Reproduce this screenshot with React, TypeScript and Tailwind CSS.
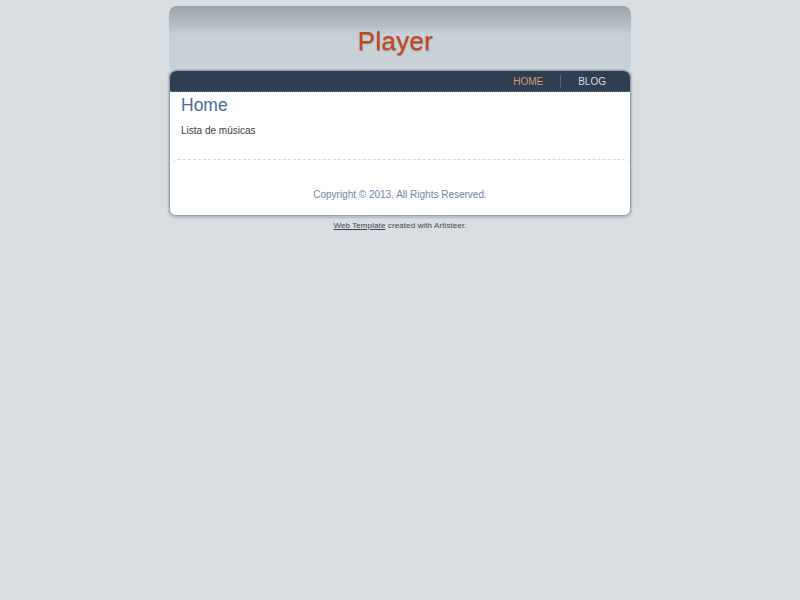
export default function App() {
  return (
    <div className="min-h-screen bg-[#d9dee2] pt-[6px] font-['Liberation_Sans',Arial,sans-serif]">
      <div className="mx-auto w-[462px]">
        {/* header */}
        <div className="flex h-[63px] items-center justify-center rounded-t-[8px] bg-[linear-gradient(to_bottom,#98a3ac_0%,#b4bec6_30%,#c8d0d7_45%,#c9d1d8_100%)] pt-[7px] pr-[9px]">
          <h1 className="text-[26px] leading-none tracking-[0.3px] text-[#c5471a] [text-shadow:0_1px_1px_rgba(60,30,10,0.45)]">
            Player
          </h1>
        </div>

        {/* card */}
        <div className="mt-[1px] overflow-hidden rounded-[7px] border border-[#97a1aa] bg-white shadow-[0_0_0_1px_#b8c0c7,0_1px_2px_1px_rgba(80,90,100,0.3)]">
          <nav className="flex h-[21px] items-center justify-end border-b border-dotted border-[#6b7a8a] bg-[#2f3e50] pr-[24px] text-[10px]">
            <a className="pr-[17px] text-[#d39a74]">HOME</a>
            <span className="h-[13px] w-px bg-[#56657a]" />
            <a className="pl-[17px] text-[#d5dde6]">BLOG</a>
          </nav>

          <div className="h-[67px] px-[11px] pt-[2px]">
            <h2 className="text-[17.5px] leading-[22px] text-[#4c6b97]">Home</h2>
            <p className="mt-[7px] text-[10px] text-[#3b3b4a]">Lista de músicas</p>
          </div>

          <footer className="h-[56px] rounded-t-[8px] border-t border-dashed border-[#d4d9e0] pt-[27px] text-center text-[10px] text-[#6f86a8]">
            Copyright © 2013. All Rights Reserved.
          </footer>
        </div>

        <p className="mt-[4px] text-center text-[8px] tracking-[0.1px] text-[#3e4652]">
          <a className="underline">Web Template</a> created with Artisteer.
        </p>
      </div>
    </div>
  );
}
